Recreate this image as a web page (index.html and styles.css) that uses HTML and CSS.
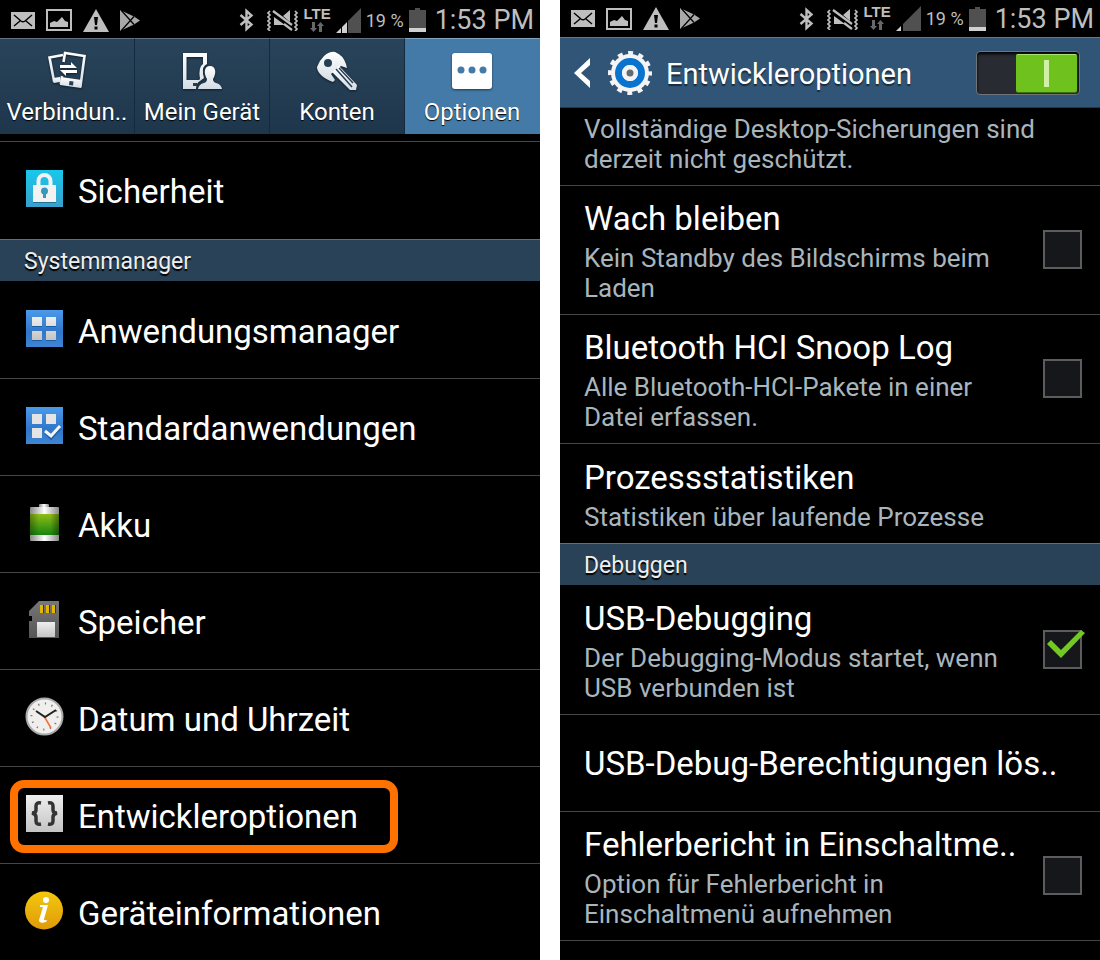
FILE: index.html
```html
<!DOCTYPE html>
<html lang="de">
<head>
<meta charset="utf-8">
<meta name="viewport" content="width=device-width, initial-scale=1">
<title>Einstellungen</title>
<link rel="stylesheet" href="styles.css">
</head>
<body>
<svg class="sprite" aria-hidden="true">
  <defs>
    <symbol id="mail" viewBox="0 0 24 17"><path fill="#bebebe" d="M0 0h24v17H0z"/><path fill="none" stroke="#000" stroke-width="1.400" d="M3 3l7 6q2 1.500 4 0l7-6M3 14l6-5M21 14l-6-5"/></symbol>
    <symbol id="picture" viewBox="0 0 26 22"><path fill="none" stroke="#bebebe" stroke-width="2" d="M1 1h24v20H1z"/><path fill="#bebebe" d="M4 18v-4l4-2 3 1 5-5 3 4 3 1v5z"/></symbol>
    <symbol id="warn" viewBox="0 0 26 23"><path fill="#bebebe" d="M13 0l13 23H0z"/><path fill="#000" d="M11 8h4l-1 8h-2zM11.500 17.500h3v3h-3z"/></symbol>
    <symbol id="play" viewBox="0 0 20 21"><path fill="#a8a8a8" d="M0 0l14 6.500 6 4-6 4L0 21z"/><path fill="none" stroke="#000" stroke-width="1.300" d="M1 0l13 14.500M1 21L14 6.500"/></symbol>
    <symbol id="bluetooth" viewBox="0 0 15 24"><path fill="none" stroke="#bebebe" stroke-width="2.400" d="M1.500 7l11 9.500L7.500 21V3l5 4.500-11 9.500"/></symbol>
    <symbol id="mute" viewBox="0 0 32 22"><path fill="none" stroke="#bebebe" stroke-width="1.700" d="M3 2l-2 2 2 2-2 2 2 2-2 2 2 2-2 2 2 2-2 2 2 2M28 2l2 2-2 2 2 2-2 2 2 2-2 2 2 2-2 2 2 2-2 2"/><path fill="#bebebe" d="M7 8l11 8H7zM16 7l7-6v12z"/><path stroke="#bebebe" stroke-width="2.200" d="M6 2l19 14M17 15l8 6"/></symbol>
    <symbol id="data" viewBox="0 0 14 10"><path fill="#686868" d="M2 0h3v6h2l-3.500 4L0 6h2zM9 10h3V4h2l-3.500-4L7 4h2z"/></symbol>
    <symbol id="signal-two" viewBox="0 0 25 25"><path fill="#505050" d="M12 13L25 0v25H12z"/><path fill="#d0d0d0" d="M0 25l5-5v5zM6 19l5-5v11H6z"/></symbol>
    <symbol id="signal-one" viewBox="0 0 25 25"><path fill="#505050" d="M7 18L25 0v25H7z"/><path fill="#d0d0d0" d="M0 25l5-5v5z"/></symbol>
    <symbol id="charge" viewBox="0 0 17 24"><path fill="#505050" d="M0 2h6V0h5v2h6v18H0z"/><path fill="#d0d0d0" d="M0 20h17v4H0z"/></symbol>
    <linearGradient id="silver" x2="0" y2="1"><stop stop-color="#fff"/><stop offset="1" stop-color="#d3dce4"/></linearGradient>
    <linearGradient id="cyan" x2="0" y2="1"><stop stop-color="#18c8ec"/><stop offset="1" stop-color="#38a0cc"/></linearGradient>
    <linearGradient id="blue" x2="0" y2="1"><stop stop-color="#4b9aea"/><stop offset=".6" stop-color="#2f77c8"/><stop offset="1" stop-color="#3f85d4"/></linearGradient>
    <linearGradient id="green" x2="0" y2="1"><stop stop-color="#8fbd16"/><stop offset="1" stop-color="#17840f"/></linearGradient>
    <linearGradient id="metal"><stop stop-color="#888"/><stop offset=".5" stop-color="#fff"/><stop offset="1" stop-color="#888"/></linearGradient>
    <linearGradient id="shade"><stop stop-color="#000" stop-opacity=".3"/><stop offset=".3" stop-color="#000" stop-opacity="0"/><stop offset=".7" stop-color="#000" stop-opacity="0"/><stop offset="1" stop-color="#000" stop-opacity=".4"/></linearGradient>
    <linearGradient id="gold" x2="0" y2="1"><stop stop-color="#f3c80e"/><stop offset="1" stop-color="#e09a08"/></linearGradient>
    <linearGradient id="pale" x2="0" y2="1"><stop stop-color="#eee"/><stop offset="1" stop-color="#c4c4c4"/></linearGradient>
    <linearGradient id="grey" x2="0" y2="1"><stop stop-color="#777"/><stop offset="1" stop-color="#555"/></linearGradient>
  </defs>
</svg>

<main class="screens">
  <section class="screen" aria-label="Einstellungen">
    <div class="status">
      <svg width="24" height="17"><use href="#mail"/></svg>
      <svg width="26" height="22"><use href="#picture"/></svg>
      <svg width="26" height="23"><use href="#warn"/></svg>
      <svg width="20" height="21"><use href="#play"/></svg>
      <div class="status-right">
        <svg class="bt" width="15" height="24"><use href="#bluetooth"/></svg>
        <svg width="32" height="22"><use href="#mute"/></svg>
        <span class="lte">LTE<svg width="14" height="10"><use href="#data"/></svg></span>
        <svg width="25" height="25"><use href="#signal-two"/></svg>
        <span class="percent">19 %</span>
        <svg width="17" height="24"><use href="#charge"/></svg>
        <time class="clock">1:53 PM</time>
      </div>
    </div>

    <nav class="tabs">
      <button class="tab" type="button">
        <svg width="40" height="40" viewBox="0 0 40 40"><path fill="none" stroke="url(#silver)" stroke-width="2.600" d="M16 4L2.500 6.500 7 30l6-1"/><path fill="url(#silver)" d="M6 27l7-1v5l-6 1z"/><path fill="none" stroke="url(#silver)" stroke-width="2.600" d="M16.500 11L18 2l19.500 3-4 30-19.500-3 1-7"/><path fill="url(#silver)" d="M14 26l21 3-1 8-21-3z"/><path fill="#263f55" d="M22.500 30l4 .5-.5 4-4-.5z"/><path fill="#fff" d="M13 14h11v-3l6 6H13zM30 19H13l6 6v-3h11z"/></svg>
        Verbindun..
      </button>
      <button class="tab" type="button">
        <svg width="40" height="40" viewBox="0 0 40 40"><path fill="url(#silver)" fill-rule="evenodd" d="M1 2h24v11q-5 2-4 10l1 4-4 3q-4 2-4 8H1zM4.500 6v23H17l1-1q-2-12 3-15V6z"/><path fill="#263f55" d="M11 32h4v3h-4z"/><path fill="url(#silver)" d="M16 38q1-5 6-6 3-1 3-4-3-5-2-9 1-4 5-4t5 4q1 4-2 9 0 3 3 4 5 1 6 6z"/></svg>
        Mein Gerät
      </button>
      <button class="tab" type="button">
        <svg width="42" height="40" viewBox="0 0 42 40"><path fill="url(#silver)" d="M1 16Q3 10 8 5q6-5 11-4 8 3 11 12l1 4-6-2-10 8 4 6-2 2q-8-3-12-7-4-4-4-8z"/><circle cx="12" cy="12" r="4" fill="#263f55"/><path fill="url(#silver)" d="M16 21l7-6 18 19-1 5h-6z"/><path stroke="#263f55" stroke-width="1.500" d="M20 18l16 18M23 17l14 15"/></svg>
        Konten
      </button>
      <button class="tab tab-active" type="button">
        <svg width="40" height="40" viewBox="0 0 40 40"><rect y="2" width="40" height="36" rx="3" fill="#fff"/><g fill="#437aa7"><circle cx="9" cy="19" r="3.500"/><circle cx="20" cy="19" r="3.500"/><circle cx="31" cy="19" r="3.500"/></g></svg>
        Optionen
      </button>
    </nav>

    <div class="menu">
      <a class="item" href="#"><svg width="40" height="40" viewBox="0 0 40 40"><path fill="url(#cyan)" d="M2 1h37v37H2z"/><path fill="none" stroke="#f2f2f2" stroke-width="4" d="M14.500 17v-5a6 6 0 0112 0v5"/><path fill="#f2f2f2" d="M9 16h23v17H9z"/><circle cx="20.500" cy="22" r="3.500" fill="#3598bd"/><path fill="#3598bd" d="M19 23h3v6h-3z"/><path fill="#1f6c91" d="M9 33h23v1H9z"/></svg>Sicherheit</a>
      <h2 class="section">Systemmanager</h2>
      <a class="item" href="#"><svg width="40" height="40" viewBox="0 0 40 40"><path fill="url(#blue)" d="M2 1h37v37H2z"/><path fill="#1e5da6" d="M8 17h10v1H8zm14 0h10v1H22zM8 31h10v1H8zm14 0h10v1H22z"/><path fill="url(#pale)" d="M8 8h10v9H8zm14 0h10v9H22zM8 22h10v9H8zm14 0h10v9H22z"/></svg>Anwendungsmanager</a>
      <a class="item" href="#"><svg width="40" height="40" viewBox="0 0 40 40"><path fill="url(#blue)" d="M2 1h37v37H2z"/><path fill="#e4e4e4" d="M8 8h10v10H8zm14 0h10v10H22zM8 22h10v10H8z"/><path fill="none" stroke="#205c9c" stroke-width="3" d="M21 26l6 6 9-10"/><path fill="none" stroke="#f5f5f5" stroke-width="3" d="M21 25l6 5 9-10"/></svg>Standardanwendungen</a>
      <a class="item" href="#"><svg width="40" height="40" viewBox="0 0 40 40"><rect x="15" y="1" width="10" height="6" rx="1" fill="url(#metal)"/><rect x="6" y="4" width="29" height="34" rx="1" fill="url(#metal)"/><path fill="url(#green)" d="M6 11h29v21H6z"/><path fill="url(#shade)" d="M6 11h29v21H6z"/></svg>Akku</a>
      <a class="item" href="#"><svg width="40" height="40" viewBox="0 0 40 40"><path fill="url(#grey)" d="M15 1h20v37H5V21h3v-5H5v-5z"/><path fill="#e7b500" d="M16 5h3v8h-3zm6 0h3v8h-3zm6 0h3v8h-3z"/><path fill="#333" d="M19 5h1v8h-1zm6 0h1v8h-1zm6 0h1v8h-1z"/><path fill="url(#pale)" d="M13 22h18v15H13z"/></svg>Speicher</a>
      <a class="item" href="#"><svg width="40" height="40" viewBox="0 0 40 40"><circle cx="20.500" cy="19.500" r="18" fill="#f0efed" stroke="#aaa" stroke-width="2"/><circle cx="20.500" cy="19.500" r="13" fill="none" stroke="#777" stroke-width="2" stroke-dasharray="1.200 5.607"/><path stroke="#ef7038" stroke-width="1.500" d="M20 19l7 12"/><path fill="none" stroke="#222" stroke-width="2" d="M12 14l9 6 11-7"/></svg>Datum und Uhrzeit</a>
      <a class="item item-marked" href="#"><svg width="40" height="40" viewBox="0 0 40 40"><path fill="url(#pale)" d="M2 1h37v37H2z"/><path fill="none" stroke="#333" stroke-width="3.500" d="M17 9q-5-1-5 3v4q0 3-4 3 4 1 4 4v4q0 4 5 3M24 9q5-1 5 3v4q0 3 4 3-4 1-4 4v4q0 4-5 3"/></svg>Entwickleroptionen</a>
      <a class="item" href="#"><svg width="40" height="40" viewBox="0 0 40 40"><circle cx="20" cy="19.500" r="19" fill="url(#gold)"/><circle cx="22" cy="9" r="3" fill="#fff"/><path fill="#fff" d="M16 14h8l-4 14q0 2 2 1h1l-1 2q-7 2-7-2l4-13h-3z"/></svg>Geräteinformationen</a>
    </div>
  </section>

  <section class="screen" aria-label="Entwickleroptionen">
    <div class="status status-short">
      <svg width="24" height="17"><use href="#mail"/></svg>
      <svg width="26" height="22"><use href="#picture"/></svg>
      <svg width="26" height="23"><use href="#warn"/></svg>
      <svg width="20" height="21"><use href="#play"/></svg>
      <div class="status-right">
        <svg class="bt" width="15" height="24"><use href="#bluetooth"/></svg>
        <svg width="32" height="22"><use href="#mute"/></svg>
        <span class="lte">LTE<svg width="14" height="10"><use href="#data"/></svg></span>
        <svg width="25" height="25"><use href="#signal-one"/></svg>
        <span class="percent">19 %</span>
        <svg width="17" height="24"><use href="#charge"/></svg>
        <time class="clock">1:53 PM</time>
      </div>
    </div>

    <header class="bar">
      <button class="back" type="button" aria-label="Zurück"><svg width="16" height="30" viewBox="0 0 16 30"><path fill="#fff" d="M16 0v7L7 15l9 8v7L0 15z"/></svg></button>
      <svg width="44" height="44" viewBox="0 0 44 44"><circle cx="22" cy="22" r="20" fill="none" stroke="#f4f4f4" stroke-width="4" stroke-dasharray="5 5.472" stroke-dashoffset="2.500"/><circle cx="22" cy="22" r="19" fill="#f4f4f4"/><circle cx="22" cy="22" r="11.500" fill="none" stroke="#0874cf" stroke-width="7"/><circle cx="22" cy="22" r="5.500" fill="none" stroke="#f4f4f4" stroke-width="5"/><circle cx="22" cy="22" r="3.500" fill="#646b70"/></svg>
      <h1 class="bar-title"><label for="dev">Entwickleroptionen</label></h1>
      <input class="switch" type="checkbox" role="switch" id="dev" checked>
    </header>

    <div class="options">
      <p class="note">Vollständige Desktop-Sicherungen sind derzeit nicht geschützt.</p>
      <label class="option option-tall"><span class="copy"><span class="title">Wach bleiben</span><span class="desc">Kein Standby des Bildschirms beim Laden</span></span><span class="check"><input type="checkbox"></span></label>
      <label class="option option-tall"><span class="copy"><span class="title">Bluetooth HCI Snoop Log</span><span class="desc">Alle Bluetooth-HCI-Pakete in einer Datei erfassen.</span></span><span class="check"><input type="checkbox"></span></label>
      <a class="option" href="#"><span class="copy"><span class="title">Prozessstatistiken</span><span class="desc">Statistiken über laufende Prozesse</span></span></a>
      <h2 class="section">Debuggen</h2>
      <label class="option option-tall"><span class="copy"><span class="title">USB-Debugging</span><span class="desc">Der Debugging-Modus startet, wenn USB verbunden ist</span></span><span class="check"><input type="checkbox" checked><svg class="tick" width="38" height="28" viewBox="0 0 38 28"><path fill="#72c922" d="M0 14l4-4 10 10L34 0l4 3-24 25z"/></svg></span></label>
      <button class="option option-single" type="button"><span class="title">USB-Debug-Berechtigungen lös..</span></button>
      <label class="option option-tall"><span class="copy"><span class="title">Fehlerbericht in Einschaltme..</span><span class="desc">Option für Fehlerbericht in Einschaltmenü aufnehmen</span></span><span class="check"><input type="checkbox"></span></label>
      <hr class="end">
    </div>
  </section>
</main>
</body>
</html>
```
FILE: styles.css
```css
*,
*::before,
*::after {
  box-sizing: border-box;
}

body {
  margin: 0;
  background: #fff;
  color: #fff;
  font-family: Roboto, "Noto Sans", sans-serif;
}

button,
input {
  margin: 0;
  font: inherit;
}

a {
  color: inherit;
  text-decoration: none;
}

h1,
h2,
p {
  margin: 0;
  font-weight: 400;
}

svg {
  display: block;
  flex: none;
}

.sprite {
  position: absolute;
  width: 0;
  height: 0;
}

.screens {
  display: grid;
  grid-template-columns: 1fr 1fr;
  gap: 20px;
  min-height: 100vh;
}

.screen {
  min-width: 0;
  background: #000;
}

/* Status bar */

.status {
  display: flex;
  align-items: center;
  gap: 11px;
  height: 38px;
  padding: 2px 6px 0 11px;
  color: #bebebe;
}

.status-short {
  height: 37px;
  padding-top: 0;
}

.status-right {
  display: flex;
  align-items: center;
  gap: 5px;
  margin-left: auto;
}

.bt {
  margin-right: 8px;
}

.lte {
  display: flex;
  flex-direction: column;
  align-items: center;
  gap: 1px;
  padding-bottom: 2px;
  font: 700 15px/14px "Liberation Sans", sans-serif;
}

.percent {
  font-size: 18px;
  white-space: nowrap;
}

.clock {
  margin-left: 4px;
  font-size: 27px;
  line-height: 32px;
  white-space: nowrap;
}

/* Tabs */

.tabs {
  display: grid;
  grid-template-columns: repeat(4, minmax(0, 1fr));
  height: 96px;
}

.tab {
  display: flex;
  flex-direction: column;
  align-items: center;
  gap: 5px;
  padding: 12px 0 0;
  border: 0;
  border-top: 1px solid #5f7585;
  border-right: 1px solid #132b3f;
  background: linear-gradient(#29445a, #1e364c);
  color: #fff;
  font-size: 24px;
  line-height: 32px;
  text-shadow: 0 1px 1px #000;
  white-space: nowrap;
}

.tab svg {
  filter: drop-shadow(0 1px 1px #0008);
}

.tab-active {
  border-top-color: #7fa4c1;
  border-right-color: #437aa7;
  background: #437aa7;
}

/* Settings list */

.menu {
  padding-top: 7px;
}

.item {
  position: relative;
  display: flex;
  align-items: center;
  gap: 14px;
  min-height: 97px;
  padding: 3px 24px 0;
  border-top: 1px solid #454545;
  font-size: 33px;
  line-height: 40px;
}

.item:first-child {
  min-height: 98px;
}

.item svg {
  margin-bottom: 6px;
}

.section {
  height: 42px;
  padding: 0 24px;
  border-top: 1px solid #5b7080;
  background: #294257;
  color: #eee;
  font-size: 23px;
  line-height: 44px;
  text-shadow: 0 2px 1px #000;
}

.section + .item,
.section + .option {
  border-top-color: transparent;
}

.item-marked::after {
  content: "";
  position: absolute;
  top: 13px;
  left: 10px;
  width: 388px;
  height: 73px;
  border: 8px solid #ff7200;
  border-radius: 14px;
}

/* Developer options */

.bar {
  display: flex;
  align-items: center;
  height: 71px;
  padding: 0 20px 0 14px;
  border-top: 1px solid #5e7a91;
  border-bottom: 1px solid #1e3850;
  background: #305577;
}

.back {
  margin-right: 18px;
  padding: 0;
  border: 0;
  background: none;
}

.bar-title {
  flex: 1;
  margin-left: 14px;
  padding-top: 2px;
  font-size: 29px;
  line-height: 36px;
  text-shadow: 0 2px 1px #1b2b3a;
}

.switch {
  display: flex;
  justify-content: flex-end;
  width: 104px;
  height: 44px;
  padding: 2px;
  border: 1px solid #70757a;
  border-radius: 4px;
  appearance: none;
  background: #292b32;
  box-shadow: inset 0 2px 3px #000;
}

.switch::before {
  content: "";
  width: 61px;
  height: 38px;
  border-top: 1px solid #a9e36d;
  border-radius: 2px;
  background: linear-gradient(#d0f0a8, #d0f0a8) center / 5px 27px no-repeat, #6fc21d;
  box-shadow: 0 1px 0 #3d7212;
}

.note {
  padding: 6px 24px 11px;
}

.note,
.desc {
  color: #a9b5bc;
  font-size: 26px;
  line-height: 30px;
}

.option {
  display: flex;
  align-items: center;
  justify-content: space-between;
  width: 100%;
  min-height: 100px;
  padding: 12px 18px 10px 24px;
  border: 0;
  border-top: 1px solid #454545;
  background: none;
  color: #fff;
  text-align: left;
}

.option-tall {
  min-height: 129px;
}

.option-single {
  min-height: 97px;
}

.copy {
  display: flex;
  flex-direction: column;
  flex: 1;
  gap: 4px;
  min-width: 0;
}

.title {
  font-size: 33px;
  line-height: 40px;
  white-space: nowrap;
}

.check {
  position: relative;
  margin-left: 18px;
  padding-bottom: 4px;
}

.check input {
  display: block;
  width: 39px;
  height: 39px;
  border: 2px solid #5c5c5c;
  appearance: none;
  background: #16171b;
}

.tick {
  position: absolute;
  top: 0;
  left: 4px;
}

.end {
  margin: 0;
  border: 0;
  border-top: 1px solid #454545;
}
```
